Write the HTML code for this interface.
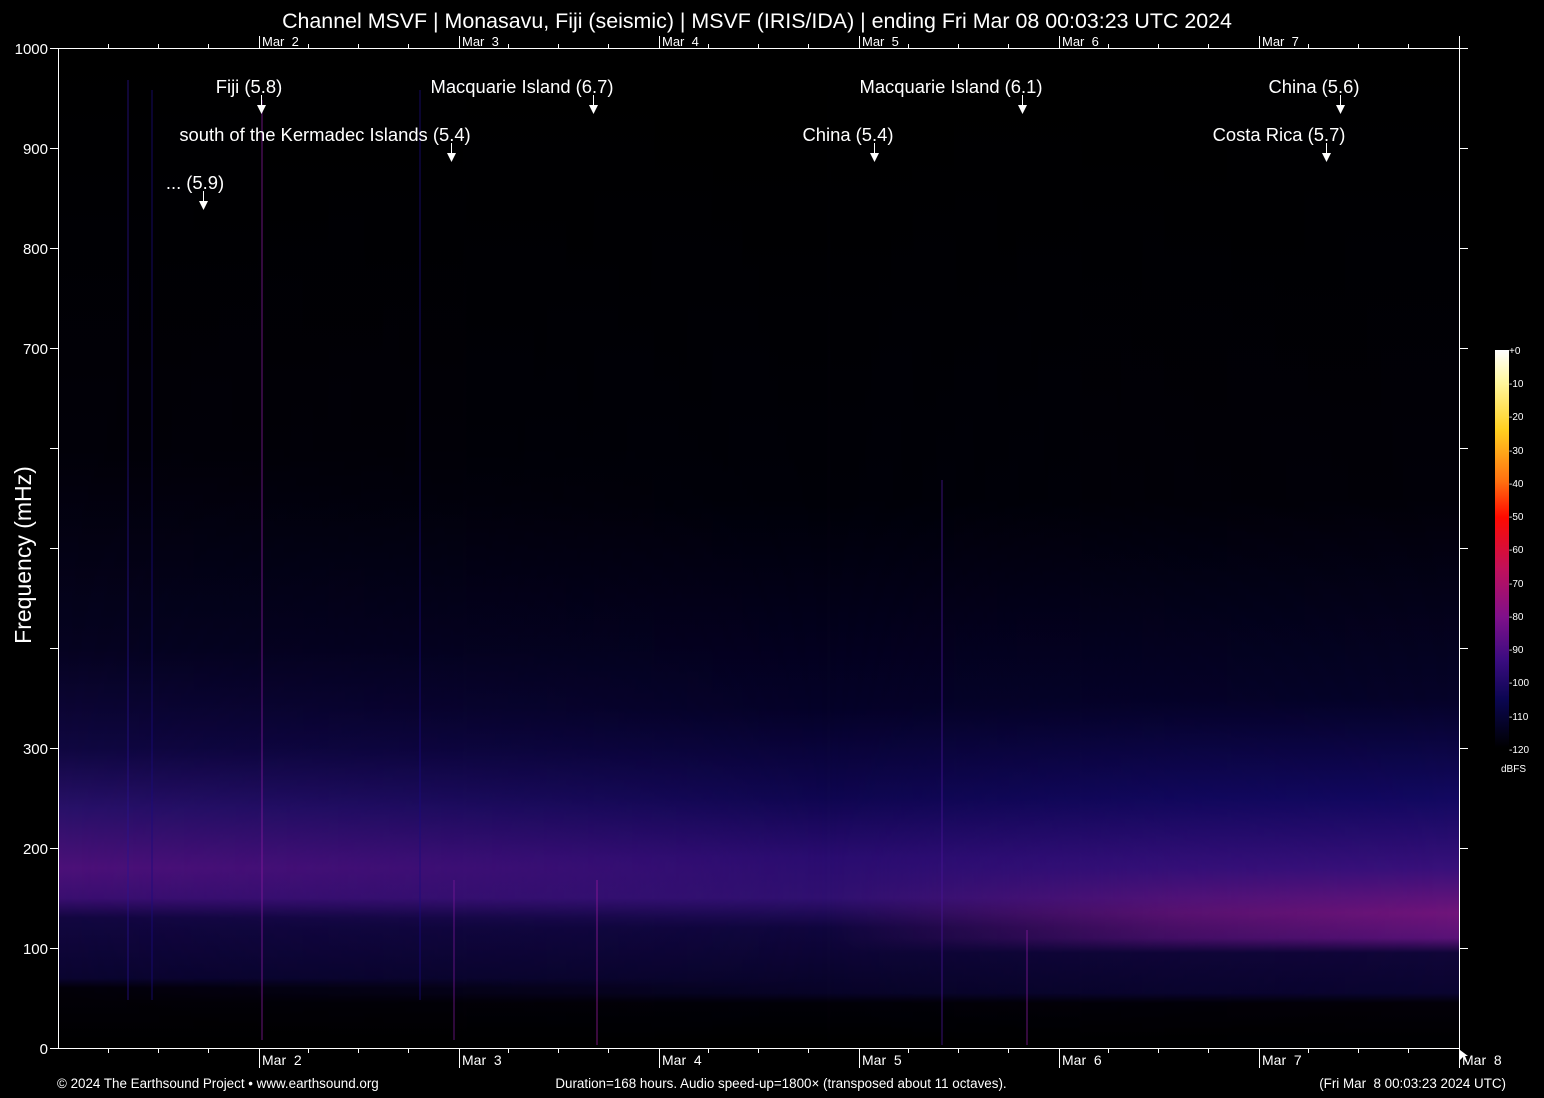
<!DOCTYPE html>
<html><head><meta charset="utf-8"><style>
html,body{margin:0;padding:0;background:#000;}
svg{display:block;}
text{font-family:"Liberation Sans",sans-serif;fill:#fff;white-space:pre;}
</style></head><body>
<svg width="1544" height="1098" viewBox="0 0 1544 1098" xmlns="http://www.w3.org/2000/svg" xml:space="preserve">
<defs>
<linearGradient id="vL" x1="0" y1="0" x2="0" y2="1">
 <stop offset="0" stop-color="#000"/>
 <stop offset="0.4" stop-color="#010008"/>
 <stop offset="0.6" stop-color="#050220"/>
 <stop offset="0.7" stop-color="#0f0640"/>
 <stop offset="0.76" stop-color="#281068"/>
 <stop offset="0.82" stop-color="#4c1078"/>
 <stop offset="0.85" stop-color="#3a0e70"/>
 <stop offset="0.87" stop-color="#120640"/>
 <stop offset="0.93" stop-color="#0a0430"/>
 <stop offset="0.94" stop-color="#020008"/>
 <stop offset="1" stop-color="#000"/>
</linearGradient>
<linearGradient id="vR" x1="0" y1="0" x2="0" y2="1">
 <stop offset="0" stop-color="#000"/>
 <stop offset="0.45" stop-color="#010008"/>
 <stop offset="0.65" stop-color="#050228"/>
 <stop offset="0.75" stop-color="#120860"/>
 <stop offset="0.82" stop-color="#38107a"/>
 <stop offset="0.865" stop-color="#70147a"/>
 <stop offset="0.89" stop-color="#5a1278"/>
 <stop offset="0.905" stop-color="#100538"/>
 <stop offset="0.945" stop-color="#0a0430"/>
 <stop offset="0.955" stop-color="#020008"/>
 <stop offset="1" stop-color="#000"/>
</linearGradient>
<linearGradient id="vM" x1="0" y1="0" x2="0" y2="1">
 <stop offset="0" stop-color="#000"/>
 <stop offset="0.45" stop-color="#010008"/>
 <stop offset="0.66" stop-color="#050228"/>
 <stop offset="0.75" stop-color="#0f0650"/>
 <stop offset="0.81" stop-color="#2a0c70"/>
 <stop offset="0.85" stop-color="#301070"/>
 <stop offset="0.88" stop-color="#10063e"/>
 <stop offset="0.945" stop-color="#080428"/>
 <stop offset="0.955" stop-color="#020008"/>
 <stop offset="1" stop-color="#000"/>
</linearGradient>
<linearGradient id="h" x1="0" y1="0" x2="1" y2="0">
 <stop offset="0" stop-color="#fff" stop-opacity="1"/>
 <stop offset="0.35" stop-color="#fff" stop-opacity="0.4"/>
 <stop offset="0.55" stop-color="#fff" stop-opacity="0"/>
</linearGradient>
<linearGradient id="h2" x1="0" y1="0" x2="1" y2="0">
 <stop offset="0.55" stop-color="#fff" stop-opacity="0"/>
 <stop offset="0.8" stop-color="#fff" stop-opacity="0.7"/>
 <stop offset="1" stop-color="#fff" stop-opacity="1"/>
</linearGradient>
<mask id="mL"><rect x="58" y="48" width="1402" height="1000" fill="url(#h)"/></mask>
<mask id="mR"><rect x="58" y="48" width="1402" height="1000" fill="url(#h2)"/></mask>
<linearGradient id="cb" x1="0" y1="0" x2="0" y2="1">
 <stop offset="0" stop-color="#ffffff"/>
 <stop offset="0.08" stop-color="#fff8a0"/>
 <stop offset="0.2" stop-color="#ffd020"/>
 <stop offset="0.33" stop-color="#ff7010"/>
 <stop offset="0.42" stop-color="#ff0a00"/>
 <stop offset="0.55" stop-color="#c0105a"/>
 <stop offset="0.67" stop-color="#80108a"/>
 <stop offset="0.78" stop-color="#3a0c80"/>
 <stop offset="0.88" stop-color="#0a0650"/>
 <stop offset="1" stop-color="#000"/>
</linearGradient>
</defs>

<rect x="58" y="48" width="1402" height="1000" fill="url(#vM)"/>
<rect x="58" y="48" width="1402" height="1000" fill="url(#vL)" mask="url(#mL)"/>
<rect x="58" y="48" width="1402" height="1000" fill="url(#vR)" mask="url(#mR)"/>
<g stroke-width="1.5" opacity="0.5">
 <line x1="128" y1="80" x2="128" y2="1000" stroke="#2a1290"/>
 <line x1="152" y1="90" x2="152" y2="1000" stroke="#1a0a80"/>
 <line x1="262" y1="100" x2="262" y2="1040" stroke="#8a1aa0"/>
 <line x1="420" y1="90" x2="420" y2="1000" stroke="#1a0a80"/>
 <line x1="454" y1="880" x2="454" y2="1040" stroke="#7a1898"/>
 <line x1="597" y1="880" x2="597" y2="1045" stroke="#9a1aa0"/>
 <line x1="942" y1="480" x2="942" y2="1045" stroke="#4a1498"/>
 <line x1="1027" y1="930" x2="1027" y2="1045" stroke="#8a1aa0"/>
</g>

<g stroke="#fff" stroke-width="1" fill="none">
 <line x1="58.5" y1="48" x2="58.5" y2="1048"/>
 <line x1="1459.5" y1="48" x2="1459.5" y2="1048"/>
 <line x1="58" y1="1048.5" x2="1460" y2="1048.5"/>
 <line x1="58" y1="48.5" x2="1460" y2="48.5"/>
</g>
<g stroke="#fff">
 <path d="M50 48.5H58M50 148.5H58M50 248.5H58M50 348.5H58M50 448.5H58M50 548.5H58M50 648.5H58M50 748.5H58M50 848.5H58M50 948.5H58M50 1048.5H58"/>
 <path d="M1460 48.5H1468M1460 148.5H1468M1460 248.5H1468M1460 348.5H1468M1460 448.5H1468M1460 548.5H1468M1460 648.5H1468M1460 748.5H1468M1460 848.5H1468M1460 948.5H1468"/>
 <path d="M108.5 1048V1053M158.5 1048V1053M208.5 1048V1053M308.5 1048V1053M358.5 1048V1053M408.5 1048V1053M508.5 1048V1053M558.5 1048V1053M608.5 1048V1053M708.5 1048V1053M758.5 1048V1053M808.5 1048V1053M908.5 1048V1053M958.5 1048V1053M1008.5 1048V1053M1108.5 1048V1053M1158.5 1048V1053M1208.5 1048V1053M1308.5 1048V1053M1358.5 1048V1053M1408.5 1048V1053"/>
 <path d="M259.5 1048V1068M459.5 1048V1068M659.5 1048V1068M859.5 1048V1068M1059.5 1048V1068M1259.5 1048V1068M1459.5 1048V1068"/>
 <path d="M259.5 36V48M459.5 36V48M659.5 36V48M859.5 36V48M1059.5 36V48M1259.5 36V48M1459.5 36V48"/>
 <path d="M108.5 44V48M158.5 44V48M208.5 44V48M308.5 44V48M358.5 44V48M408.5 44V48M508.5 44V48M558.5 44V48M608.5 44V48M708.5 44V48M758.5 44V48M808.5 44V48M908.5 44V48M958.5 44V48M1008.5 44V48M1108.5 44V48M1158.5 44V48M1208.5 44V48M1308.5 44V48M1358.5 44V48M1408.5 44V48"/>
</g>

<g font-size="15" text-anchor="end">
 <text x="48" y="54">1000</text>
 <text x="48" y="154">900</text>
 <text x="48" y="254">800</text>
 <text x="48" y="354">700</text>
 <text x="48" y="754">300</text>
 <text x="48" y="854">200</text>
 <text x="48" y="954">100</text>
 <text x="48" y="1054">0</text>
</g>
<text x="0" y="0" font-size="23" text-anchor="middle" transform="translate(31,555) rotate(-90)">Frequency (mHz)</text>

<text x="757" y="28" font-size="21.4" text-anchor="middle">Channel MSVF | Monasavu, Fiji (seismic) | MSVF (IRIS/IDA) | ending Fri Mar 08 00:03:23 UTC 2024</text>

<g font-size="13">
 <text x="262" y="46">Mar  2</text>
 <text x="462" y="46">Mar  3</text>
 <text x="662" y="46">Mar  4</text>
 <text x="862" y="46">Mar  5</text>
 <text x="1062" y="46">Mar  6</text>
 <text x="1262" y="46">Mar  7</text>
</g>
<g font-size="14">
 <text x="262" y="1065">Mar  2</text>
 <text x="462" y="1065">Mar  3</text>
 <text x="662" y="1065">Mar  4</text>
 <text x="862" y="1065">Mar  5</text>
 <text x="1062" y="1065">Mar  6</text>
 <text x="1262" y="1065">Mar  7</text>
 <text x="1462" y="1065">Mar  8</text>
</g>

<g font-size="18.4">
 <text x="249" y="93" text-anchor="middle">Fiji (5.8)</text>
 <text x="522" y="93" text-anchor="middle">Macquarie Island (6.7)</text>
 <text x="951" y="93" text-anchor="middle">Macquarie Island (6.1)</text>
 <text x="1314" y="93" text-anchor="middle">China (5.6)</text>
 <text x="325" y="141" text-anchor="middle">south of the Kermadec Islands (5.4)</text>
 <text x="848" y="141" text-anchor="middle">China (5.4)</text>
 <text x="1279" y="141" text-anchor="middle">Costa Rica (5.7)</text>
 <text x="195" y="189" text-anchor="middle">... (5.9)</text>
</g>
<g stroke="#fff" fill="#fff" stroke-width="1">
 <path d="M261.5 95V106"/><path d="M257 105H266L261.5 114Z" stroke="none"/>
 <path d="M593.5 95V106"/><path d="M589 105H598L593.5 114Z" stroke="none"/>
 <path d="M1022.5 95V106"/><path d="M1018 105H1027L1022.5 114Z" stroke="none"/>
 <path d="M1340.5 95V106"/><path d="M1336 105H1345L1340.5 114Z" stroke="none"/>
 <path d="M451.5 143V154"/><path d="M447 153H456L451.5 162Z" stroke="none"/>
 <path d="M874.5 143V154"/><path d="M870 153H879L874.5 162Z" stroke="none"/>
 <path d="M1326.5 143V154"/><path d="M1322 153H1331L1326.5 162Z" stroke="none"/>
 <path d="M203.5 191V202"/><path d="M199 201H208L203.5 210Z" stroke="none"/>
 <path d="M1460 1050L1460 1060L1463 1057L1466 1062L1467 1061L1464 1056L1468 1056Z" stroke="none"/>
</g>

<rect x="1495" y="350" width="14" height="398" fill="url(#cb)"/>
<g font-size="10">
 <text x="1509" y="354" fill="#ccc">+0</text>
 <text x="1509" y="387" fill="#ccc">-10</text>
 <text x="1509" y="420" fill="#ccc">-20</text>
 <text x="1509" y="454" fill="#ccc">-30</text>
 <text x="1509" y="487" fill="#ccc">-40</text>
 <text x="1509" y="520" fill="#ccc">-50</text>
 <text x="1509" y="553" fill="#ccc">-60</text>
 <text x="1509" y="587" fill="#ccc">-70</text>
 <text x="1509" y="620" fill="#ccc">-80</text>
 <text x="1509" y="653" fill="#ccc">-90</text>
 <text x="1509" y="686" fill="#ccc">-100</text>
 <text x="1509" y="720" fill="#ccc">-110</text>
 <text x="1509" y="753" fill="#ccc">-120</text>
 <text x="1501" y="772" fill="#ccc">dBFS</text>
</g>

<g font-size="13.4">
 <text x="57" y="1088">© 2024 The Earthsound Project • www.earthsound.org</text>
 <text x="781" y="1088" text-anchor="middle">Duration=168 hours. Audio speed-up=1800× (transposed about 11 octaves).</text>
 <text x="1506" y="1088" text-anchor="end">(Fri Mar  8 00:03:23 2024 UTC)</text>
</g>
</svg>
</body></html>
